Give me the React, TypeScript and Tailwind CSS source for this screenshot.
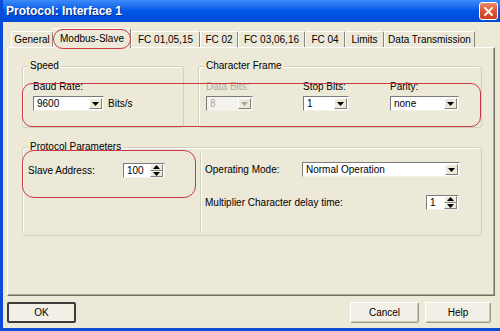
import React from 'react';

const tabs = [
  { l: 'General', w: 'w-[42px]' },
  { l: 'Modbus-Slave', w: 'w-[78px]', active: true },
  { l: 'FC 01,05,15', w: 'w-[69px]' },
  { l: 'FC 02', w: 'w-[38px]' },
  { l: 'FC 03,06,16', w: 'w-[67px]' },
  { l: 'FC 04', w: 'w-[40px]' },
  { l: 'Limits', w: 'w-[39px]' },
  { l: 'Data Transmission', w: 'w-[91px]' },
];

function Arrow({ up, disabled }: { up?: boolean; disabled?: boolean }) {
  return (
    <svg width="7" height="4" viewBox="0 0 7 4" className="block">
      <path d={up ? 'M0 4h7L3.5 0z' : 'M0 0h7L3.5 4z'} fill={disabled ? '#ACA899' : '#000'} />
    </svg>
  );
}

function Combo({ value, w, disabled }: { value: string; w: string; disabled?: boolean }) {
  return (
    <div className={`flex h-[15px] items-center border border-t-[#7b7b7b] border-l-[#7b7b7b] border-r-[#f2f1ea] border-b-[#f2f1ea] ${disabled ? 'bg-[#F4F3EE] text-[#ACA899]' : 'bg-white'} ${w}`}>
      <span className="pl-[3px] leading-[12px]">{value}</span>
      <div className="ml-auto mr-px flex h-[11px] w-[13px] items-center justify-center border border-t-white border-l-white border-r-[#808080] border-b-[#808080] bg-[#ECE9D8]">
        <Arrow disabled={disabled} />
      </div>
    </div>
  );
}

function Spin({ value, w }: { value: string; w: string }) {
  return (
    <div className={`flex h-[15px] items-center border border-t-[#7b7b7b] border-l-[#7b7b7b] border-r-[#f2f1ea] border-b-[#f2f1ea] bg-white ${w}`}>
      <span className="pl-[3px] leading-[12px]">{value}</span>
      <div className="ml-auto mr-px flex h-[13px] w-[13px] flex-col">
        <div className="flex flex-1 items-center justify-center border border-t-white border-l-white border-r-[#808080] border-b-[#808080] bg-[#ECE9D8]">
          <Arrow up />
        </div>
        <div className="flex flex-1 items-center justify-center border border-t-white border-l-white border-r-[#808080] border-b-[#808080] bg-[#ECE9D8]">
          <Arrow />
        </div>
      </div>
    </div>
  );
}

function Group({ title, className, children }: { title: string; className: string; children?: React.ReactNode }) {
  return (
    <div className={`relative rounded-[3px] border border-[#D0D0BF] shadow-[inset_1px_1px_0_#fff] ${className}`}>
      <span className="absolute -top-[7px] left-[5px] bg-[#ECE9D8] px-[2px] leading-[12px]">{title}</span>
      {children}
    </div>
  );
}

export default function App() {
  return (
    <div className="relative flex h-[331px] w-[500px] flex-col overflow-hidden border-b-[3px] border-l-[3px] border-b-[#0A4BD8] border-l-[#0A4BD8] bg-[#ECE9D8] font-['Liberation_Sans',Arial,sans-serif] text-[10px] text-black">
      {/* title bar */}
      <div className="flex h-[22px] shrink-0 items-center justify-between bg-linear-to-b from-[#3B8BF8] via-[#0058E6] to-[#0049D8] pl-[3px]">
        <span className="text-[12px] font-bold leading-[14px] text-white [text-shadow:1px_1px_0_#0B2D8F]">Protocol: Interface 1</span>
        <div className="mr-[2px] flex h-[18px] w-[19px] items-center justify-center rounded-[3px] border border-white bg-linear-to-b from-[#EA8A6A] via-[#E0552E] to-[#C8401C]">
          <svg width="9" height="9" viewBox="0 0 9 9">
            <path d="M1 1l7 7M8 1L1 8" stroke="#fff" strokeWidth="1.8" strokeLinecap="round" />
          </svg>
        </div>
      </div>

      {/* tabs */}
      <div className="mt-[6px] flex h-[19px] shrink-0 items-end pl-[8px]">
        {tabs.map(t => (
          <div
            key={t.l}
            className={`flex items-center justify-center whitespace-nowrap rounded-t-[2px] border-l border-t border-l-white border-t-white border-r border-r-[#8A877A] leading-[12px] ${t.w} ${t.active ? 'relative z-10 -mb-px h-[20px] bg-[#ECE9D8]' : 'h-[16px]'}`}
          >
            {t.l}
          </div>
        ))}
      </div>

      {/* tab panel */}
      <div className="ml-[4px] h-[249px] w-[488px] shrink-0 border-l border-t border-b border-r border-l-white border-t-white border-b-[#716F64] border-r-[#716F64] pl-[14px] pt-[18px] shadow-[inset_-1px_-1px_0_#ACA899]">
        <div className="flex gap-[14px]">
          <Group title="Speed" className="h-[62px] w-[162px] pl-[10px] pt-[14px]">
            <div className="leading-[12px]">Baud Rate:</div>
            <div className="mt-[3px] flex items-center gap-[4px]">
              <Combo value="9600" w="w-[71px]" />
              <span className="leading-[12px]">Bits/s</span>
            </div>
          </Group>
          <Group title="Character Frame" className="flex h-[62px] w-[284px] pl-[7px] pt-[14px]">
            <div className="w-[97px]">
              <div className="leading-[12px] text-[#ACA899]">Data Bits:</div>
              <div className="mt-[3px]"><Combo value="8" w="w-[47px]" disabled /></div>
            </div>
            <div className="w-[87px]">
              <div className="leading-[12px]">Stop Bits:</div>
              <div className="mt-[3px]"><Combo value="1" w="w-[46px]" /></div>
            </div>
            <div>
              <div className="leading-[12px]">Parity:</div>
              <div className="mt-[3px]"><Combo value="none" w="w-[69px]" /></div>
            </div>
          </Group>
        </div>

        <Group title="Protocol Parameters" className="mt-[19px] flex h-[89px] w-[460px]">
          <div className="w-[177px] pl-[5px] pt-[15px]">
            <div className="flex items-center">
              <span className="w-[95px] leading-[12px]">Slave Address:</span>
              <Spin value="100" w="w-[42px]" />
            </div>
          </div>
          <div className="my-[3px] w-px bg-[#D0D0BF] shadow-[1px_0_0_#fff]" />
          <div className="pl-[4px] pt-[14px]">
            <div className="flex items-center">
              <span className="w-[97px] leading-[12px]">Operating Mode:</span>
              <Combo value="Normal Operation" w="w-[158px]" />
            </div>
            <div className="mt-[18px] flex items-center">
              <span className="w-[221px] leading-[12px]">Multiplier Character delay time:</span>
              <Spin value="1" w="w-[33px]" />
            </div>
          </div>
        </Group>
      </div>

      {/* buttons */}
      <div className="mt-[6px] flex shrink-0 items-center justify-between">
        <button className="ml-[4px] h-[21px] w-[69px] rounded-[2px] border-2 border-[#3C3B37] bg-[#F1EFE6] leading-[12px]">OK</button>
        <div className="mr-[9px] flex gap-[6px]">
          <button className="h-[21px] w-[69px] rounded-[2px] border border-b-[#9D9A8C] border-r-[#9D9A8C] border-l-white border-t-white bg-[#F1EFE6] leading-[12px] shadow-[inset_-1px_-1px_0_#C9C6B6]">Cancel</button>
          <button className="h-[21px] w-[66px] rounded-[2px] border border-b-[#9D9A8C] border-r-[#9D9A8C] border-l-white border-t-white bg-[#F1EFE6] leading-[12px] shadow-[inset_-1px_-1px_0_#C9C6B6]">Help</button>
        </div>
      </div>

      {/* red markings drawn over the dialog */}
      <div className="pointer-events-none absolute left-[50px] top-[29px] z-20 h-[20px] w-[78px] rounded-full border-[1.5px] border-[#C93A45]" />
      <div className="pointer-events-none absolute left-[19px] top-[83px] z-20 h-[44px] w-[459px] rounded-[10px] border-[1.5px] border-[#C93A45]" />
      <div className="pointer-events-none absolute left-[19px] top-[150px] z-20 h-[48px] w-[174px] rounded-[12px] border-[1.5px] border-[#C93A45]" />
    </div>
  );
}
